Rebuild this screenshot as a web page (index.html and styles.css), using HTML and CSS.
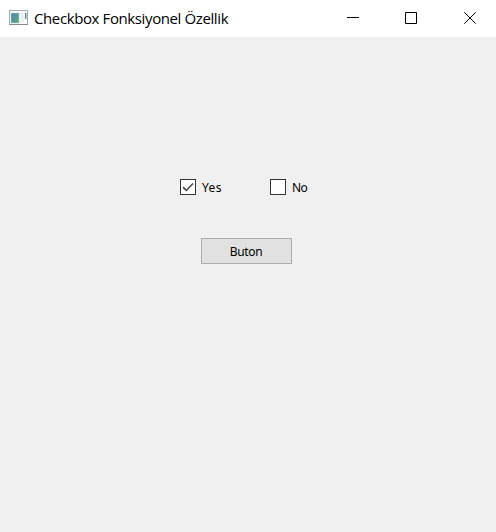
FILE: index.html
```html
<!DOCTYPE html>
<html lang="tr">
<head>
<meta charset="utf-8">
<title>Checkbox Fonksiyonel Özellik</title>
<link rel="stylesheet" href="styles.css">
</head>
<body>
<div class="window">
  <header class="titlebar">
    <svg class="app-icon" width="20" height="16" viewBox="0 0 20 16">
      <defs>
        <linearGradient id="pane" x1="0" y1="0" x2="1" y2="1">
          <stop offset="0" stop-color="#4b83a6"/>
          <stop offset="1" stop-color="#5fae7b"/>
        </linearGradient>
      </defs>
      <rect x="0.5" y="0.5" width="18" height="14" fill="#fafbfc" stroke="#a3a9af"/>
      <path d="M0 14.5h19" stroke="#858b91"/>
      <rect x="2" y="3" width="8" height="10" fill="url(#pane)" stroke="#b9cdd6" stroke-width=".5"/>
      <rect x="11" y="3" width="4" height="10" fill="#eceff2"/>
      <rect x="16" y="3" width="1.5" height="6" fill="url(#pane)"/>
    </svg>
    <h1 class="title">Checkbox Fonksiyonel Özellik</h1>
    <div class="controls">
      <svg width="12" height="12" viewBox="0 0 12 12"><path d="M0 5.5h12"/></svg>
      <svg width="12" height="12" viewBox="0 0 12 12"><path d="M.5.5h11v11H.5z"/></svg>
      <svg width="12" height="12" viewBox="0 0 12 12"><path d="M.3.3l11.4 11.4M11.7.3L.3 11.7"/></svg>
    </div>
  </header>
  <main class="content">
    <div class="options">
      <label class="option"><span class="box"><svg width="14" height="14" viewBox="0 0 14 14"><path d="M2 7.1l3.3 3.3L12 3.5"/></svg></span><span class="label yes">Yes</span></label>
      <label class="option"><span class="box"></span><span class="label">No</span></label>
    </div>
    <button class="button" type="button">Buton</button>
  </main>
</div>
</body>
</html>
```
FILE: styles.css
```css
* { box-sizing: border-box; }
body { margin: 0; color: #000; font-family: "Noto Sans", "Open Sans", sans-serif; }
.window { height: 532px; background: #f0f0f0; display: flex; flex-direction: column; }
.titlebar { height: 37px; background: #fff; display: flex; align-items: flex-start; padding-left: 9px; }
.app-icon { margin-top: 10px; flex: none; }
.title { margin: 7px 0 0 5px; font-family: "Open Sans", sans-serif; font-size: 15px; font-weight: 400; line-height: 22px; letter-spacing: -0.39px; white-space: nowrap; }
.controls { display: grid; grid-template-columns: 58px 59px 12px; margin: 12px 20px 0 auto; }
.controls svg { fill: none; stroke: #000; stroke-width: 1; }
.content { display: flex; flex-direction: column; padding-top: 142px; }
.options { display: flex; padding-left: 180px; }
.option { display: flex; align-items: center; width: 90px; height: 16px; gap: 6px; }
.box { width: 16px; height: 16px; border: 1px solid #333; background: #fff; flex: none; }
.box svg { display: block; fill: none; stroke: #444; stroke-width: 1.5; }
.label { padding-top: 1px; font-size: 12px; line-height: 16px; letter-spacing: -0.5px; }
.yes { letter-spacing: 0.4px; }
.button { width: 91px; height: 26px; margin: 43px 0 0 201px; padding: 1px 1px 0 0; border: 1px solid #adadad; background: #e1e1e1; color: #000; font: 12px/23px "Noto Sans", sans-serif; letter-spacing: -0.35px; }
```
